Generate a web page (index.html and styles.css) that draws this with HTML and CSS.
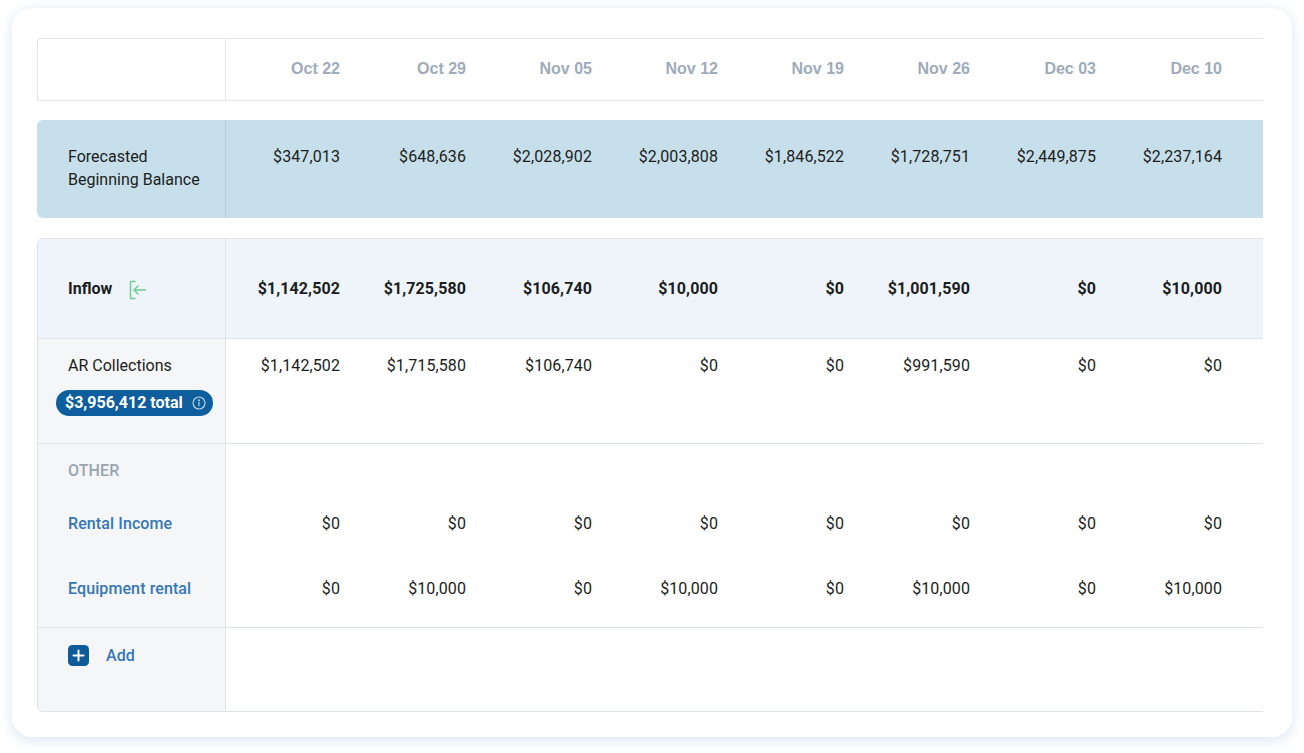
FILE: index.html
```html
<!DOCTYPE html>
<html>
<head>
<meta charset="utf-8">
<link rel="stylesheet" href="styles.css">
</head>
<body>
<div class="card">
  <div class="scroller">
    <div class="row head-row">
      <div class="lbl"></div>
      <div class="cell">Oct 22</div>
      <div class="cell">Oct 29</div>
      <div class="cell">Nov 05</div>
      <div class="cell">Nov 12</div>
      <div class="cell">Nov 19</div>
      <div class="cell">Nov 26</div>
      <div class="cell">Dec 03</div>
      <div class="cell">Dec 10</div>
      <div class="cell"></div>
    </div>

    <div class="row balance-row">
      <div class="lbl">Forecasted<br>Beginning Balance</div>
      <div class="cell">$347,013</div>
      <div class="cell">$648,636</div>
      <div class="cell">$2,028,902</div>
      <div class="cell">$2,003,808</div>
      <div class="cell">$1,846,522</div>
      <div class="cell">$1,728,751</div>
      <div class="cell">$2,449,875</div>
      <div class="cell">$2,237,164</div>
      <div class="cell"></div>
    </div>

    <div class="group">
      <div class="row inflow-row">
        <div class="lbl">Inflow
          <svg class="inflow-icon" width="18" height="20" viewBox="0 0 18 20" fill="none" stroke="#74cc95" stroke-width="1.5" stroke-linecap="round" stroke-linejoin="round">
            <path d="M6 1.5H1.5v17H6"/>
            <path d="M16.5 10H5"/>
            <path d="M9 6l-4 4 4 4"/>
          </svg>
        </div>
        <div class="cell">$1,142,502</div>
        <div class="cell">$1,725,580</div>
        <div class="cell">$106,740</div>
        <div class="cell">$10,000</div>
        <div class="cell">$0</div>
        <div class="cell">$1,001,590</div>
        <div class="cell">$0</div>
        <div class="cell">$10,000</div>
        <div class="cell"></div>
      </div>

      <div class="row ar-row">
        <div class="lbl">
          <div class="lbl-text">AR Collections</div>
          <span class="pill">$3,956,412 total
            <svg width="14" height="14" viewBox="0 0 14 14" fill="none" stroke="rgba(255,255,255,0.75)" stroke-width="1.1">
              <circle cx="7" cy="7" r="6"/>
              <path d="M7 6.2v3.6" stroke-linecap="round"/>
              <circle cx="7" cy="4.3" r="0.4" fill="rgba(255,255,255,0.8)"/>
            </svg>
          </span>
        </div>
        <div class="cell">$1,142,502</div>
        <div class="cell">$1,715,580</div>
        <div class="cell">$106,740</div>
        <div class="cell">$0</div>
        <div class="cell">$0</div>
        <div class="cell">$991,590</div>
        <div class="cell">$0</div>
        <div class="cell">$0</div>
        <div class="cell"></div>
      </div>

      <div class="other">
        <div class="row sub other-title">
          <div class="lbl"><span class="caps">OTHER</span></div>
          <div class="cell"></div><div class="cell"></div><div class="cell"></div>
          <div class="cell"></div><div class="cell"></div><div class="cell"></div>
          <div class="cell"></div><div class="cell"></div><div class="cell"></div>
        </div>
        <div class="row sub rental">
          <div class="lbl link">Rental Income</div>
          <div class="cell">$0</div>
          <div class="cell">$0</div>
          <div class="cell">$0</div>
          <div class="cell">$0</div>
          <div class="cell">$0</div>
          <div class="cell">$0</div>
          <div class="cell">$0</div>
          <div class="cell">$0</div>
          <div class="cell"></div>
        </div>
        <div class="row sub equip">
          <div class="lbl link">Equipment rental</div>
          <div class="cell">$0</div>
          <div class="cell">$10,000</div>
          <div class="cell">$0</div>
          <div class="cell">$10,000</div>
          <div class="cell">$0</div>
          <div class="cell">$10,000</div>
          <div class="cell">$0</div>
          <div class="cell">$10,000</div>
          <div class="cell"></div>
        </div>
      </div>

      <div class="row add-row">
        <div class="lbl">
          <span class="add-btn">
            <svg width="21" height="21" viewBox="0 0 21 21">
              <rect x="0" y="0" width="21" height="21" rx="4.5" fill="#0f5b9a"/>
              <path d="M10.5 5.5v10M5.5 10.5h10" stroke="#fff" stroke-width="2" stroke-linecap="round"/>
            </svg>
            <span class="link">Add</span>
          </span>
        </div>
        <div class="cell"></div>
      </div>
    </div>
  </div>
</div>
</body>
</html>
```

FILE: styles.css
```css
* { box-sizing: border-box; }

html, body {
  margin: 0;
  padding: 0;
  background: #ffffff;
}

body {
  font-family: Roboto, "Liberation Sans", Arial, sans-serif;
  font-size: 16px;
  color: #1b1d20;
  width: 1304px;
  height: 753px;
  overflow: hidden;
}

.card {
  margin: 8px 0 0 12px;
  width: 1280px;
  height: 729px;
  background: #fff;
  border-radius: 20px;
  box-shadow: 0 3px 14px rgba(120, 160, 205, 0.28);
  padding: 30px 29px 0 25px;
}

.scroller {
  width: 1226px;
  overflow: hidden;
}

.row {
  display: grid;
  grid-template-columns: 188px repeat(9, 126px);
  width: 1322px;
}

.cell {
  text-align: right;
  padding-right: 12px;
  line-height: 20px;
  letter-spacing: 0.1px;
}

.lbl {
  padding-left: 30px;
  border-right: 1px solid #dde3e8;
  line-height: 20px;
}

/* header */
.head-row {
  height: 63px;
  border: 1px solid #e3e7eb;
  border-right: none;
  border-top-left-radius: 4px;
  align-items: center;
}
.head-row .lbl {
  height: 100%;
  border-right-color: #e3e7eb;
}
.head-row .cell {
  font-family: "Liberation Sans", Arial, sans-serif;
  font-weight: 700;
  font-size: 16px;
  color: #9eacb9;
  letter-spacing: 0;
  padding-bottom: 2px;
}

/* balance */
.balance-row {
  margin-top: 19px;
  grid-template-columns: 189px repeat(9, 126px);
  height: 98px;
  background: #c7dfeb;
  border-radius: 6px 0 0 6px;
}
.balance-row .lbl {
  border-right-color: #b6ceda;
  padding-left: 31px;
  padding-top: 25px;
  line-height: 23px;
}
.balance-row .cell {
  padding-top: 25px;
  line-height: 23px;
}

/* inflow group */
.group {
  margin-top: 20px;
  width: 1324px;
  border: 1px solid #dde3e8;
  border-radius: 6px 0 0 6px;
  overflow: hidden;
}

.inflow-row {
  height: 100px;
  background: #eef4f9;
  border-bottom: 1px solid #dde3e8;
  align-items: center;
  font-weight: 700;
}
.inflow-row .lbl {
  height: 100%;
  display: flex;
  align-items: center;
}
.inflow-icon {
  margin-left: 17px;
  margin-top: 2px;
}

.ar-row {
  height: 105px;
  border-bottom: 1px solid #dde3e8;
}
.ar-row .lbl {
  background: #f4f6f8;
  padding-left: 18px;
  padding-top: 17px;
}
.ar-row .lbl-text {
  padding-left: 12px;
}
.ar-row .cell {
  padding-top: 17px;
}

.pill {
  margin-top: 14px;
  display: inline-flex;
  align-items: center;
  gap: 9px;
  height: 26px;
  padding: 0 7px 0 9px;
  border-radius: 13px;
  background: #0e5e9e;
  color: #fff;
  font-weight: 700;
  font-size: 16px;
}

.sub .lbl { background: #f4f6f8; }

.other-title { height: 53px; }
.other-title .lbl { padding-top: 17px; }
.caps {
  font-weight: 500;
  font-size: 16px;
  color: #9aa5af;
  letter-spacing: 0.1px;
}

.rental { height: 58px; }
.rental .lbl, .rental .cell { padding-top: 17px; }

.equip {
  height: 73px;
  border-bottom: 1px solid #dde3e8;
}
.equip .lbl, .equip .cell { padding-top: 24px; }

.link {
  color: #3577b5;
  font-weight: 500;
  letter-spacing: 0.1px;
}

.add-row { height: 83px; }
.add-row .lbl {
  background: #f4f6f8;
  padding-top: 17px;
}
.add-btn {
  display: inline-flex;
  align-items: center;
  gap: 17px;
}
.add-btn svg { display: block; }
```
